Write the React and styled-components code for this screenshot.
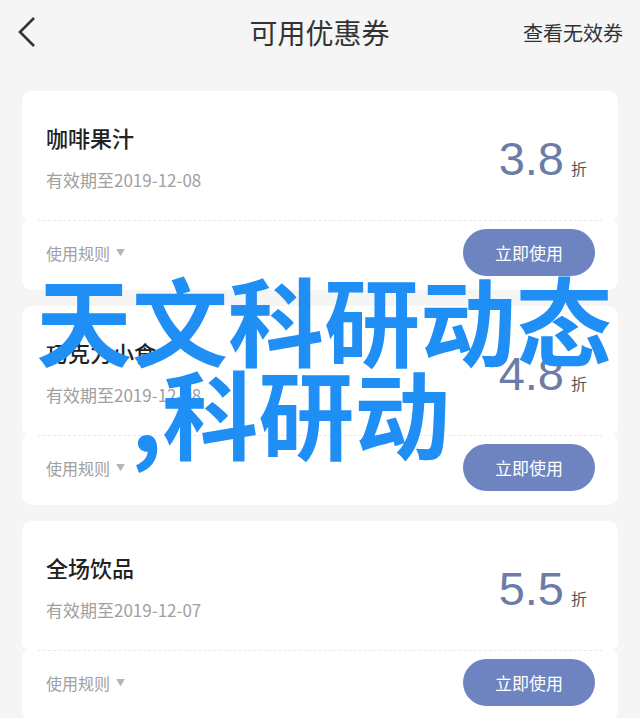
import React from "react";
import styled, { createGlobalStyle } from "styled-components";

const Global = createGlobalStyle`
  html, body { margin: 0; padding: 0; background: #f5f5f5; }
  body { font-family: "Noto Sans CJK SC", "Noto Sans", sans-serif; }
`;

const Page = styled.div`
  position: relative;
  width: 640px;
  height: 718px;
  overflow: hidden;
  background: #f5f5f5;
`;

const Header = styled.div`
  height: 68px;
  display: grid;
  grid-template-columns: 120px 1fr 120px;
  align-items: center;
  padding: 0 17px 0 16px;
  box-sizing: border-box;
`;

const Back = styled.div`
  display: flex;
  align-items: center;
  height: 68px;
  margin-top: -4px;
`;

const Title = styled.div`
  text-align: center;
  font-size: 28px;
  color: #333;
  margin-top: -5px;
`;

const Invalid = styled.div`
  text-align: right;
  font-size: 20px;
  color: #333;
  margin-top: -4px;
`;

const List = styled.div`
  display: flex;
  flex-direction: column;
  gap: 16px;
  padding: 23px 22px 0;
`;

const Card = styled.div`
  background: #fff;
  border-radius: 10px;
  height: 199px;
  display: flex;
  flex-direction: column;
  flex-shrink: 0;
`;

const Top = styled.div`
  height: 129px;
  display: flex;
  justify-content: space-between;
  padding: 31px 31px 0 24px;
  box-sizing: border-box;
`;

const Info = styled.div`
  display: flex;
  flex-direction: column;
  gap: 16px;
`;

const Name = styled.div`
  font-size: 22px;
  line-height: 30px;
  color: #222;
  font-weight: 500;
`;

const Expire = styled.div`
  font-size: 17px;
  line-height: 24px;
  color: #a0a0a0;
`;

const Discount = styled.div`
  display: flex;
  align-items: baseline;
  gap: 7px;
  margin-top: 11px;
  color: #6b7ca6;
`;

const Value = styled.span`
  font-family: "Liberation Sans", Arial, sans-serif;
  font-size: 47px;
  line-height: 52px;
`;

const Unit = styled.span`
  font-size: 16px;
  color: #555;
`;

const Divider = styled.div`
  position: relative;
  margin: 0 16px;
  border-top: 1px dashed #e8e8e8;
  &::before, &::after {
    content: "";
    position: absolute;
    top: -5px;
    width: 8px;
    height: 8px;
    border-radius: 50%;
    background: #f7f7f7;
  }
  &::before { left: -20px; }
  &::after { right: -20px; }
`;

const Bottom = styled.div`
  flex: 1;
  display: flex;
  align-items: center;
  justify-content: space-between;
  padding: 0 23px 6px 24px;
`;

const Rule = styled.div`
  font-size: 16px;
  color: #a0a0a0;
  display: flex;
  align-items: center;
  gap: 6px;
`;

const Caret = styled.span`
  font-size: 9px;
  color: #b5b5b5;
`;

const Use = styled.button`
  width: 132px;
  height: 47px;
  border: none;
  border-radius: 24px;
  background: #6d84c1;
  color: #fff;
  font-family: "Noto Sans CJK SC", sans-serif;
  font-size: 17px;
  padding: 0;
`;

const Watermark = styled.div`
  position: absolute;
  left: 36px;
  top: 271px;
  color: #1f8ef5;
  font-family: "Noto Sans CJK SC", sans-serif;
  font-weight: 700;
  font-size: 96px;
  line-height: 93px;
  white-space: nowrap;
  pointer-events: none;
`;

const WaterLine = styled.div`
  padding-left: ${(p) => p.$indent || 0}px;
`;

const coupons = [
  { name: "咖啡果汁", date: "2019-12-08", value: "3.8" },
  { name: "巧克力小食", date: "2019-12-08", value: "4.8" },
  { name: "全场饮品", date: "2019-12-07", value: "5.5" },
];

export default function App() {
  return (
    <Page>
      <Global />
      <Header>
        <Back>
          <svg width="22" height="32" viewBox="0 0 22 32">
            <path d="M18 2 L4 16 L18 30" fill="none" stroke="#333" strokeWidth="2.6" />
          </svg>
        </Back>
        <Title>可用优惠券</Title>
        <Invalid>查看无效券</Invalid>
      </Header>
      <List>
        {coupons.map((c) => (
          <Card key={c.name}>
            <Top>
              <Info>
                <Name>{c.name}</Name>
                <Expire>有效期至{c.date}</Expire>
              </Info>
              <Discount>
                <Value>{c.value}</Value>
                <Unit>折</Unit>
              </Discount>
            </Top>
            <Divider />
            <Bottom>
              <Rule>
                使用规则<Caret>▼</Caret>
              </Rule>
              <Use>立即使用</Use>
            </Bottom>
          </Card>
        ))}
      </List>
      <Watermark>
        <WaterLine>天文科研动态</WaterLine>
        <WaterLine $indent={95}>,科研动</WaterLine>
      </Watermark>
    </Page>
  );
}
